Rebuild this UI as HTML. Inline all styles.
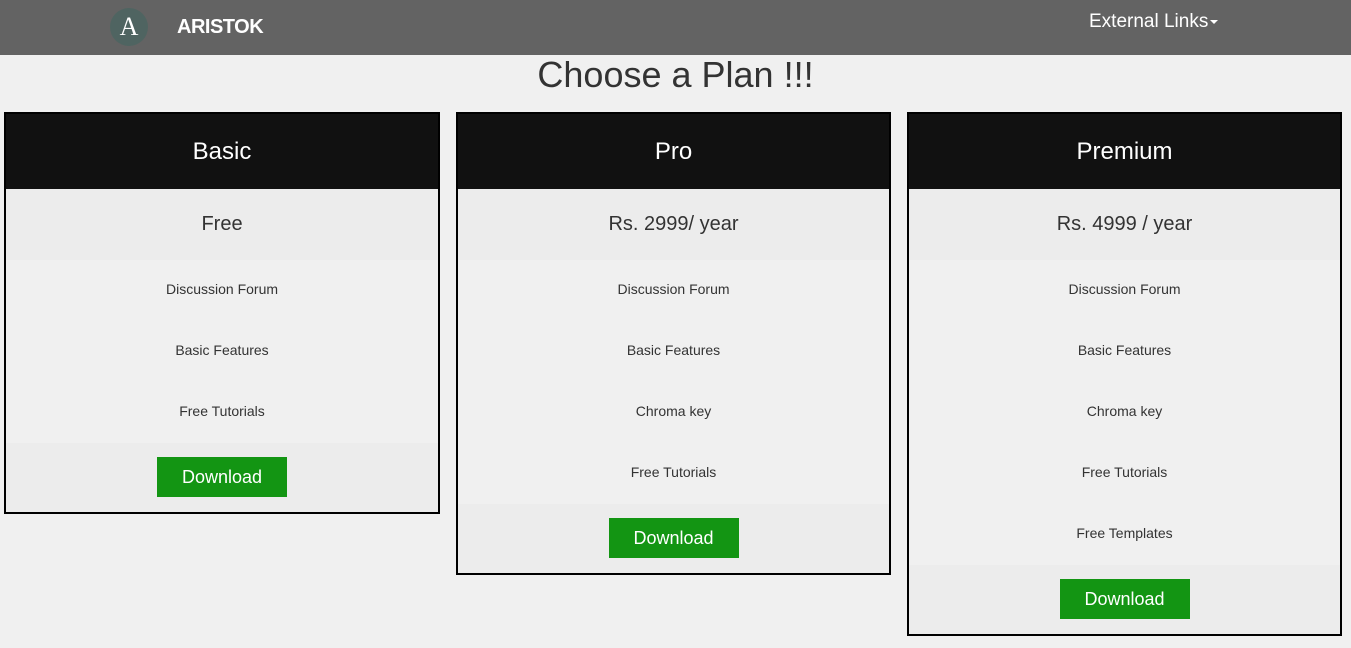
<!DOCTYPE html>
<html><head><style>
*{box-sizing:border-box;margin:0;padding:0}
body{width:1351px;height:648px;background:#f0f0f0;font-family:"Liberation Sans",Arial,sans-serif;position:relative;overflow:hidden}
.nav{position:absolute;left:0;top:0;width:1351px;height:55px;background:#636363}
.logo{position:absolute;left:110px;top:8px;width:38px;height:38px;border-radius:50%;background:#4f6461;color:#fff;font-size:26px;text-align:center;line-height:38px;font-family:"Liberation Serif",serif}
.brand{position:absolute;left:177px;top:16px;color:#fff;font-weight:bold;font-size:20px;letter-spacing:-0.5px}
.ext{position:absolute;left:1089px;top:11px;color:#fff;font-size:19px}
.ext:after{content:"";display:inline-block;border-left:4px solid transparent;border-right:4px solid transparent;border-top:4px solid #fff;vertical-align:middle;margin-left:2px}
h1{position:absolute;left:0;width:1351px;top:54px;text-align:center;font-weight:normal;font-size:36px;color:#333}
.card{position:absolute;top:112px;width:435px;border:2px solid #000;background:#f0f0f0}
.hd{height:75px;background:#111;color:#fff;font-size:24px;text-align:center;line-height:76px}
.pr{height:71px;background:#ececec;color:#333;font-size:20px;text-align:center;line-height:70px}
.f{height:61px;line-height:59px;text-align:center;font-size:14px;color:#333}
.b{height:69px;background:#ececec;text-align:center;padding-top:14px}
.b span{display:inline-block;width:130px;height:40px;line-height:40px;background:#139513;color:#fff;font-size:18px}
</style></head><body>
<div class="nav"><div class="logo">A</div><div class="brand">ARISTOK</div><div class="ext">External Links</div></div>
<h1>Choose a Plan !!!</h1>
<div class="card" style="left:4px;width:436px"><div class="hd">Basic</div><div class="pr">Free</div><div class="f">Discussion Forum</div><div class="f">Basic Features</div><div class="f">Free Tutorials</div><div class="b"><span>Download</span></div></div>
<div class="card" style="left:456px"><div class="hd">Pro</div><div class="pr">Rs. 2999/ year</div><div class="f">Discussion Forum</div><div class="f">Basic Features</div><div class="f">Chroma key</div><div class="f">Free Tutorials</div><div class="b"><span>Download</span></div></div>
<div class="card" style="left:907px"><div class="hd">Premium</div><div class="pr">Rs. 4999 / year</div><div class="f">Discussion Forum</div><div class="f">Basic Features</div><div class="f">Chroma key</div><div class="f">Free Tutorials</div><div class="f">Free Templates</div><div class="b"><span>Download</span></div></div>
</body></html>
